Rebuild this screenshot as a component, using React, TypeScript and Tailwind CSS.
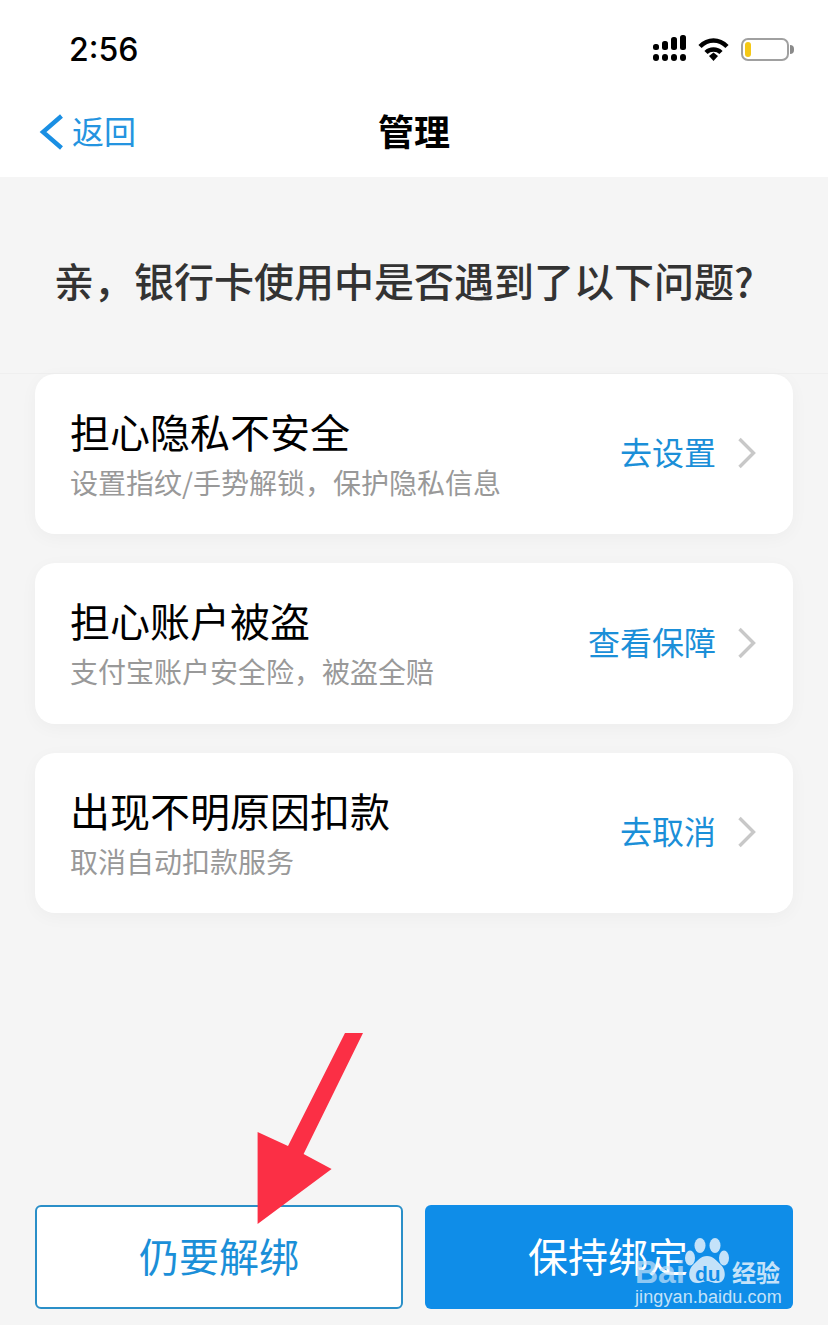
const cjk = "font-['Noto_Sans_CJK_SC','Liberation_Sans',sans-serif]";

function Card({ title, sub, action, h }: { title: string; sub: string; action: string; h: string }) {
  return (
    <div className={`${h} bg-white rounded-[20px] shadow-[0_4px_18px_rgba(0,0,0,0.035)] flex items-center pl-[35px] pr-[36px]`}>
      <div className="flex-1 min-w-0 pb-[3px]">
        <div className="text-[40px] leading-[50px] text-black">{title}</div>
        <div className="text-[28px] leading-[36px] text-[#999999] mt-[8px]">{sub}</div>
      </div>
      <div className="text-[32px] leading-[40px] text-[#1b8fd8] mr-[21px] mb-[6px]">{action}</div>
      <svg width="20" height="32" viewBox="0 0 20 32" fill="none" className="shrink-0 mb-[2px]">
        <path d="M2.5 2 L16.5 16 L2.5 30" stroke="#c8c8c8" strokeWidth="3.4" />
      </svg>
    </div>
  );
}

export default function App() {
  return (
    <div className={`relative w-[828px] h-[1325px] overflow-hidden bg-[#f5f5f5] ${cjk}`}>
      <header className="h-[177px] bg-white flex flex-col">
        <div className="h-[88px] pt-[28px] pl-[69px] pr-[34px] flex items-start justify-between">
          <span className="text-[32px] leading-[44px] font-medium text-black font-['Inter',sans-serif]">2:56</span>
          <div className="flex items-end gap-[12px] mt-[7px] h-[26px]">
            <svg width="33" height="26" viewBox="0 0 33 26" fill="#000">
              <rect x="0" y="9" width="6" height="6" rx="2.5" />
              <rect x="9" y="6" width="6" height="9" rx="2.5" />
              <rect x="18" y="2" width="6" height="13" rx="2.5" />
              <rect x="27" y="0" width="6" height="15" rx="2.5" />
              <rect x="0" y="19" width="6" height="7" rx="3" />
              <rect x="9" y="19" width="6" height="7" rx="3" />
              <rect x="18" y="19" width="6" height="7" rx="3" />
              <rect x="27" y="19" width="6" height="7" rx="3" />
            </svg>
            <svg width="31" height="23" viewBox="0 0 31 23" fill="none">
              <path d="M2 8.5 C10 0.5 21 0.5 29 8.5" stroke="#000" strokeWidth="4.5" />
              <path d="M8 14.5 C12 10.5 19 10.5 23 14.5" stroke="#000" strokeWidth="4.5" />
              <path d="M11 18 L15.5 14.5 L20 18 L15.5 23 Z" fill="#000" />
            </svg>
            <div className="flex items-center">
              <div className="w-[48px] h-[23px] border-[2px] border-[#a0a0a0] rounded-[7px] p-[2px]">
                <div className="w-[6px] h-full bg-[#f5c816] rounded-[3px]" />
              </div>
              <div className="w-[4px] h-[9px] bg-[#8a8a8a] rounded-r-[4px] ml-[1px]" />
            </div>
          </div>
        </div>
        <div className="relative flex-1 flex items-center justify-center pb-[5px]">
          <div className="absolute left-[39px] top-[22px] flex items-center gap-[8px]">
            <svg width="25" height="36" viewBox="0 0 25 36" fill="none" className="mt-[4px]">
              <path d="M22.5 2 L4 18 L22.5 34" stroke="#1a8fe3" strokeWidth="4.4" />
            </svg>
            <span className="text-[32px] leading-[40px] text-[#2494e0]">返回</span>
          </div>
          <span className="text-[36px] leading-[48px] font-bold text-black">管理</span>
        </div>
      </header>

      <main className="h-[197px] border-b border-[#efefef] pt-[77px] pl-[54px]">
        <h1 className="text-[40px] leading-[52px] font-medium text-[#333333] whitespace-nowrap">亲，银行卡使用中是否遇到了以下问题?</h1>
      </main>

      <section className="px-[35px] flex flex-col gap-[29px]">
        <Card h="h-[160px]" title="担心隐私不安全" sub="设置指纹/手势解锁，保护隐私信息" action="去设置" />
        <Card h="h-[161px]" title="担心账户被盗" sub="支付宝账户安全险，被盗全赔" action="查看保障" />
        <Card h="h-[160px]" title="出现不明原因扣款" sub="取消自动扣款服务" action="去取消" />
      </section>

      <footer className="mt-[292px] px-[35px] flex gap-[22px]">
        <button className="w-[368px] h-[104px] bg-white border-[2px] border-[#2a8fc8] rounded-[6px] text-[40px] text-[#1b8fd8] pb-[4px]">仍要解绑</button>
        <button className="w-[368px] h-[104px] bg-[#0f8de8] rounded-[6px] text-[40px] text-white pb-[4px] pr-[2px]">保持绑定</button>
      </footer>

      <svg className="absolute left-[250px] top-[1030px]" width="120" height="200" viewBox="250 1030 120 200">
        <path d="M345 1033 L363 1033 L303.6 1154 L331.6 1169 L257.6 1224 L257.6 1132 L288 1146 Z" fill="#fb2f45" />
      </svg>

      <div className="absolute left-[635px] top-[1235px] w-[150px] h-[75px] text-[#c4e2f9]">
        <span className="absolute left-[0px] top-[17px] text-[32px] leading-[40px] font-bold font-['Liberation_Sans',sans-serif] opacity-70">Bai</span>
        <svg className="absolute left-[50px] top-[3px]" width="44" height="46" viewBox="0 0 44 46" fill="#c4e2f9">
          <ellipse cx="5" cy="20" rx="5" ry="7.5" />
          <ellipse cx="15" cy="7.5" rx="5.5" ry="7.5" />
          <ellipse cx="30" cy="7.5" rx="5.5" ry="7.5" />
          <ellipse cx="39" cy="20" rx="5" ry="7.5" />
          <path d="M22 18 C28 18 32 23 36 27 C42 33 41 45 32 45 C27 45 25 43 22 43 C19 43 17 45 12 45 C3 45 2 33 8 27 C12 23 16 18 22 18 Z" />
        </svg>
        <span className="absolute left-[60px] top-[27px] text-[21px] leading-[24px] font-bold font-['Liberation_Sans',sans-serif] text-[#0f8de8]">du</span>
        <span className="absolute left-[97px] top-[21px] text-[24px] leading-[32px] font-bold">经验</span>
        <span className="absolute left-[0px] top-[50px] text-[18px] leading-[24px] tracking-[0.1px] whitespace-nowrap font-['Liberation_Sans',sans-serif]">jingyan.baidu.com</span>
      </div>
    </div>
  );
}
